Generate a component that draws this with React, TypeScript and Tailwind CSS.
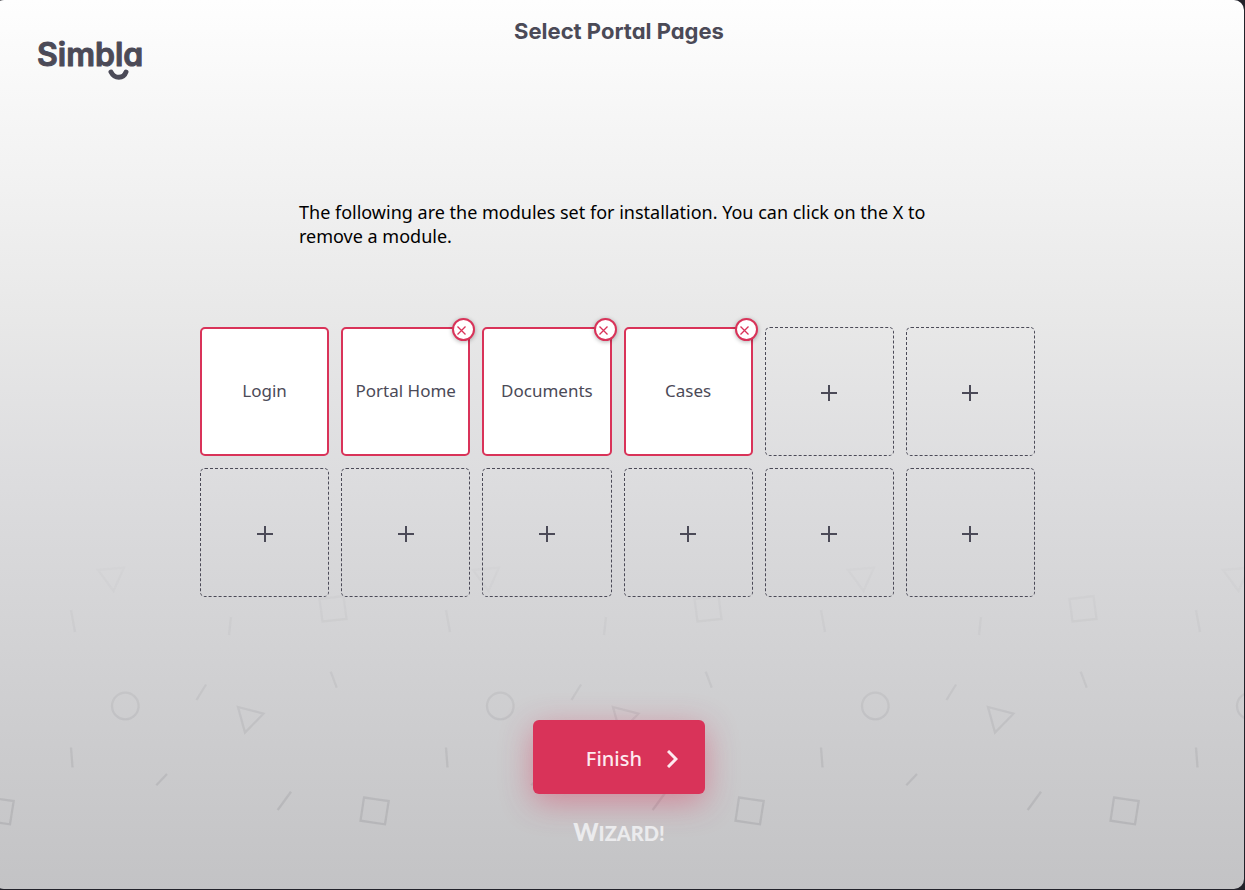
import { useState } from "react";

interface Module {
  name: string;
  removable: boolean;
}

const SLOT_COUNT = 12;

const INITIAL_MODULES: Module[] = [
  { name: "Login", removable: false },
  { name: "Portal Home", removable: true },
  { name: "Documents", removable: true },
  { name: "Cases", removable: true },
];

function Logo() {
  return (
    <a href="#" aria-label="Simbla" className="absolute left-10 top-8 block">
      <svg width="120" height="54" viewBox="0 0 120 54" fill="none">
        <text
          x="3"
          y="34"
          fill="#4b4a57"
          stroke="#4b4a57"
          strokeWidth="1"
          strokeLinejoin="round"
          className="font-['Inter',sans-serif] text-[32px] font-semibold [font-feature-settings:'cv11']"
        >
          Simbla
        </text>
        <path d="M77 40c3.500 7 12.500 7 15 0" stroke="#4b4a57" strokeWidth="5" strokeLinecap="round" />
      </svg>
    </a>
  );
}

/* Outlined confetti, repeated every 375px and fading out upwards */
function Confetti() {
  return (
    <svg
      aria-hidden="true"
      width="100%"
      height="330"
      className="pointer-events-none absolute bottom-0 left-0"
    >
      <defs>
        <linearGradient id="fade" x1="0" y1="0" x2="0" y2="1">
          <stop offset="0" stopColor="#fff" stopOpacity="0.1" />
          <stop offset="0.8" stopColor="#fff" stopOpacity="1" />
        </linearGradient>
        <mask id="fade-mask">
          <rect width="100%" height="330" fill="url(#fade)" />
        </mask>
        <pattern id="shapes" x="6" y="1" width="375" height="330" patternUnits="userSpaceOnUse">
          <g fill="none" stroke="#55555f" strokeOpacity="0.15" strokeWidth="2.300">
            <path d="M98 10 124 7.500 113.500 31Z" />
            <path d="M71 50 75 72" />
            <path d="M231 57 229 75" />
            <path d="M319.500 39 343.500 36 346.500 59 322.500 61.500Z" />
            <path d="M330.700 111.700 336.700 127.700" />
            <circle cx="125.300" cy="146" r="13.300" />
            <path d="M206 124.500 196.500 140" />
            <path d="M238 147 263.500 153.700 245 172.500Z" />
            <path d="M71 187.500 72.500 207.500" />
            <path d="M167 214 156.300 225.300" />
            <path d="M291 231.700 277.700 250" />
            <path d="M-11 237.500 13.700 241 10 264.300 -14.500 260.700Z" />
            <path d="M364 237.500 388.700 241 385 264.300 360.500 260.700Z" />
          </g>
        </pattern>
      </defs>
      <rect width="100%" height="330" fill="url(#shapes)" mask="url(#fade-mask)" />
    </svg>
  );
}

function ModuleTile({ module, onRemove }: { module: Module; onRemove: () => void }) {
  return (
    <li className="relative flex aspect-square items-center justify-center rounded-[5px] border-2 border-[#d93359] bg-white pb-0.5">
      <span className="whitespace-nowrap font-['Noto_Sans','Open_Sans',sans-serif] text-[17px] leading-6 text-[#4b4a57]">
        {module.name}
      </span>
      {module.removable && (
        <button
          type="button"
          aria-label={`Remove ${module.name}`}
          onClick={onRemove}
          className="absolute -right-[7px] -top-[11px] flex size-[23px] items-center justify-center rounded-full border-2 border-[#d93359] bg-white pr-1 pt-0.5 shadow-[0_1px_4px_rgba(0,0,0,0.3)]"
        >
          <svg width="9" height="9" viewBox="0 0 9 9" stroke="#d93359" strokeWidth="1.300">
            <path d="M0.500 0.500 8.500 8.500M8.500 0.500 0.500 8.500" />
          </svg>
        </button>
      )}
    </li>
  );
}

function EmptyTile() {
  return (
    <li className="aspect-square">
      <button
        type="button"
        aria-label="Add module"
        className="flex size-full items-center justify-center rounded-[5px] border border-dashed border-[#4b4a57] pt-[3px]"
      >
        <svg width="16" height="16" viewBox="0 0 16 16" stroke="#4b4a57" strokeWidth="2">
          <path d="M8 0V16M0 8H16" />
        </svg>
      </button>
    </li>
  );
}

export default function App() {
  const [modules, setModules] = useState(INITIAL_MODULES);

  const removeModule = (name: string) => {
    setModules((current) => current.filter((m) => m.name !== name));
  };

  return (
    <div className="flex min-h-screen overflow-hidden bg-[#22222a] pb-px pr-px">
      <main className="relative -ml-1.5 flex flex-1 flex-col items-center overflow-hidden rounded-[10px] bg-[linear-gradient(180deg,#fefefe_0%,#e8e8e8_36%,#dddddf_53%,#c3c3c5_100%)]">
        <Confetti />
        <Logo />

        <h1 className="mt-[15px] font-['Inter',sans-serif] text-[22px] font-bold leading-8 text-[#4b4a57] [font-feature-settings:'cv11']">
          Select Portal Pages
        </h1>

        <p className="mt-[153px] w-full max-w-[640px] font-['Noto_Sans','Open_Sans',sans-serif] text-lg leading-6 text-black">
          The following are the modules set for installation. You can click on the X to remove a module.
        </p>

        <ul className="mt-[79px] grid w-full max-w-[838px] grid-cols-6 gap-3 pr-[3px]">
          {modules.map((module) => (
            <ModuleTile key={module.name} module={module} onRemove={() => removeModule(module.name)} />
          ))}
          {Array.from({ length: SLOT_COUNT - modules.length }, (_, i) => (
            <EmptyTile key={i} />
          ))}
        </ul>

        <button
          type="button"
          className="relative mt-[123px] flex h-[74px] w-[172px] items-center justify-end gap-[25px] rounded-md bg-[#d93359] pr-[27px] pt-1 font-['Noto_Sans','Open_Sans',sans-serif] text-xl font-medium text-[#fdeaef] shadow-[0_8px_32px_rgba(217,51,89,0.45)]"
        >
          Finish
          <svg width="11" height="18" viewBox="0 0 11 18" fill="none" stroke="currentColor" strokeWidth="3">
            <path d="M1 1 9 9 1 17" />
          </svg>
        </button>

        {/* Wordmark under the button */}
        <div className="relative mt-[22px] h-8 whitespace-nowrap font-['Lato',sans-serif] text-xl font-black leading-8 text-[#ebebed]">
          <span className="text-2xl">W</span>IZARD!
        </div>
      </main>
    </div>
  );
}
